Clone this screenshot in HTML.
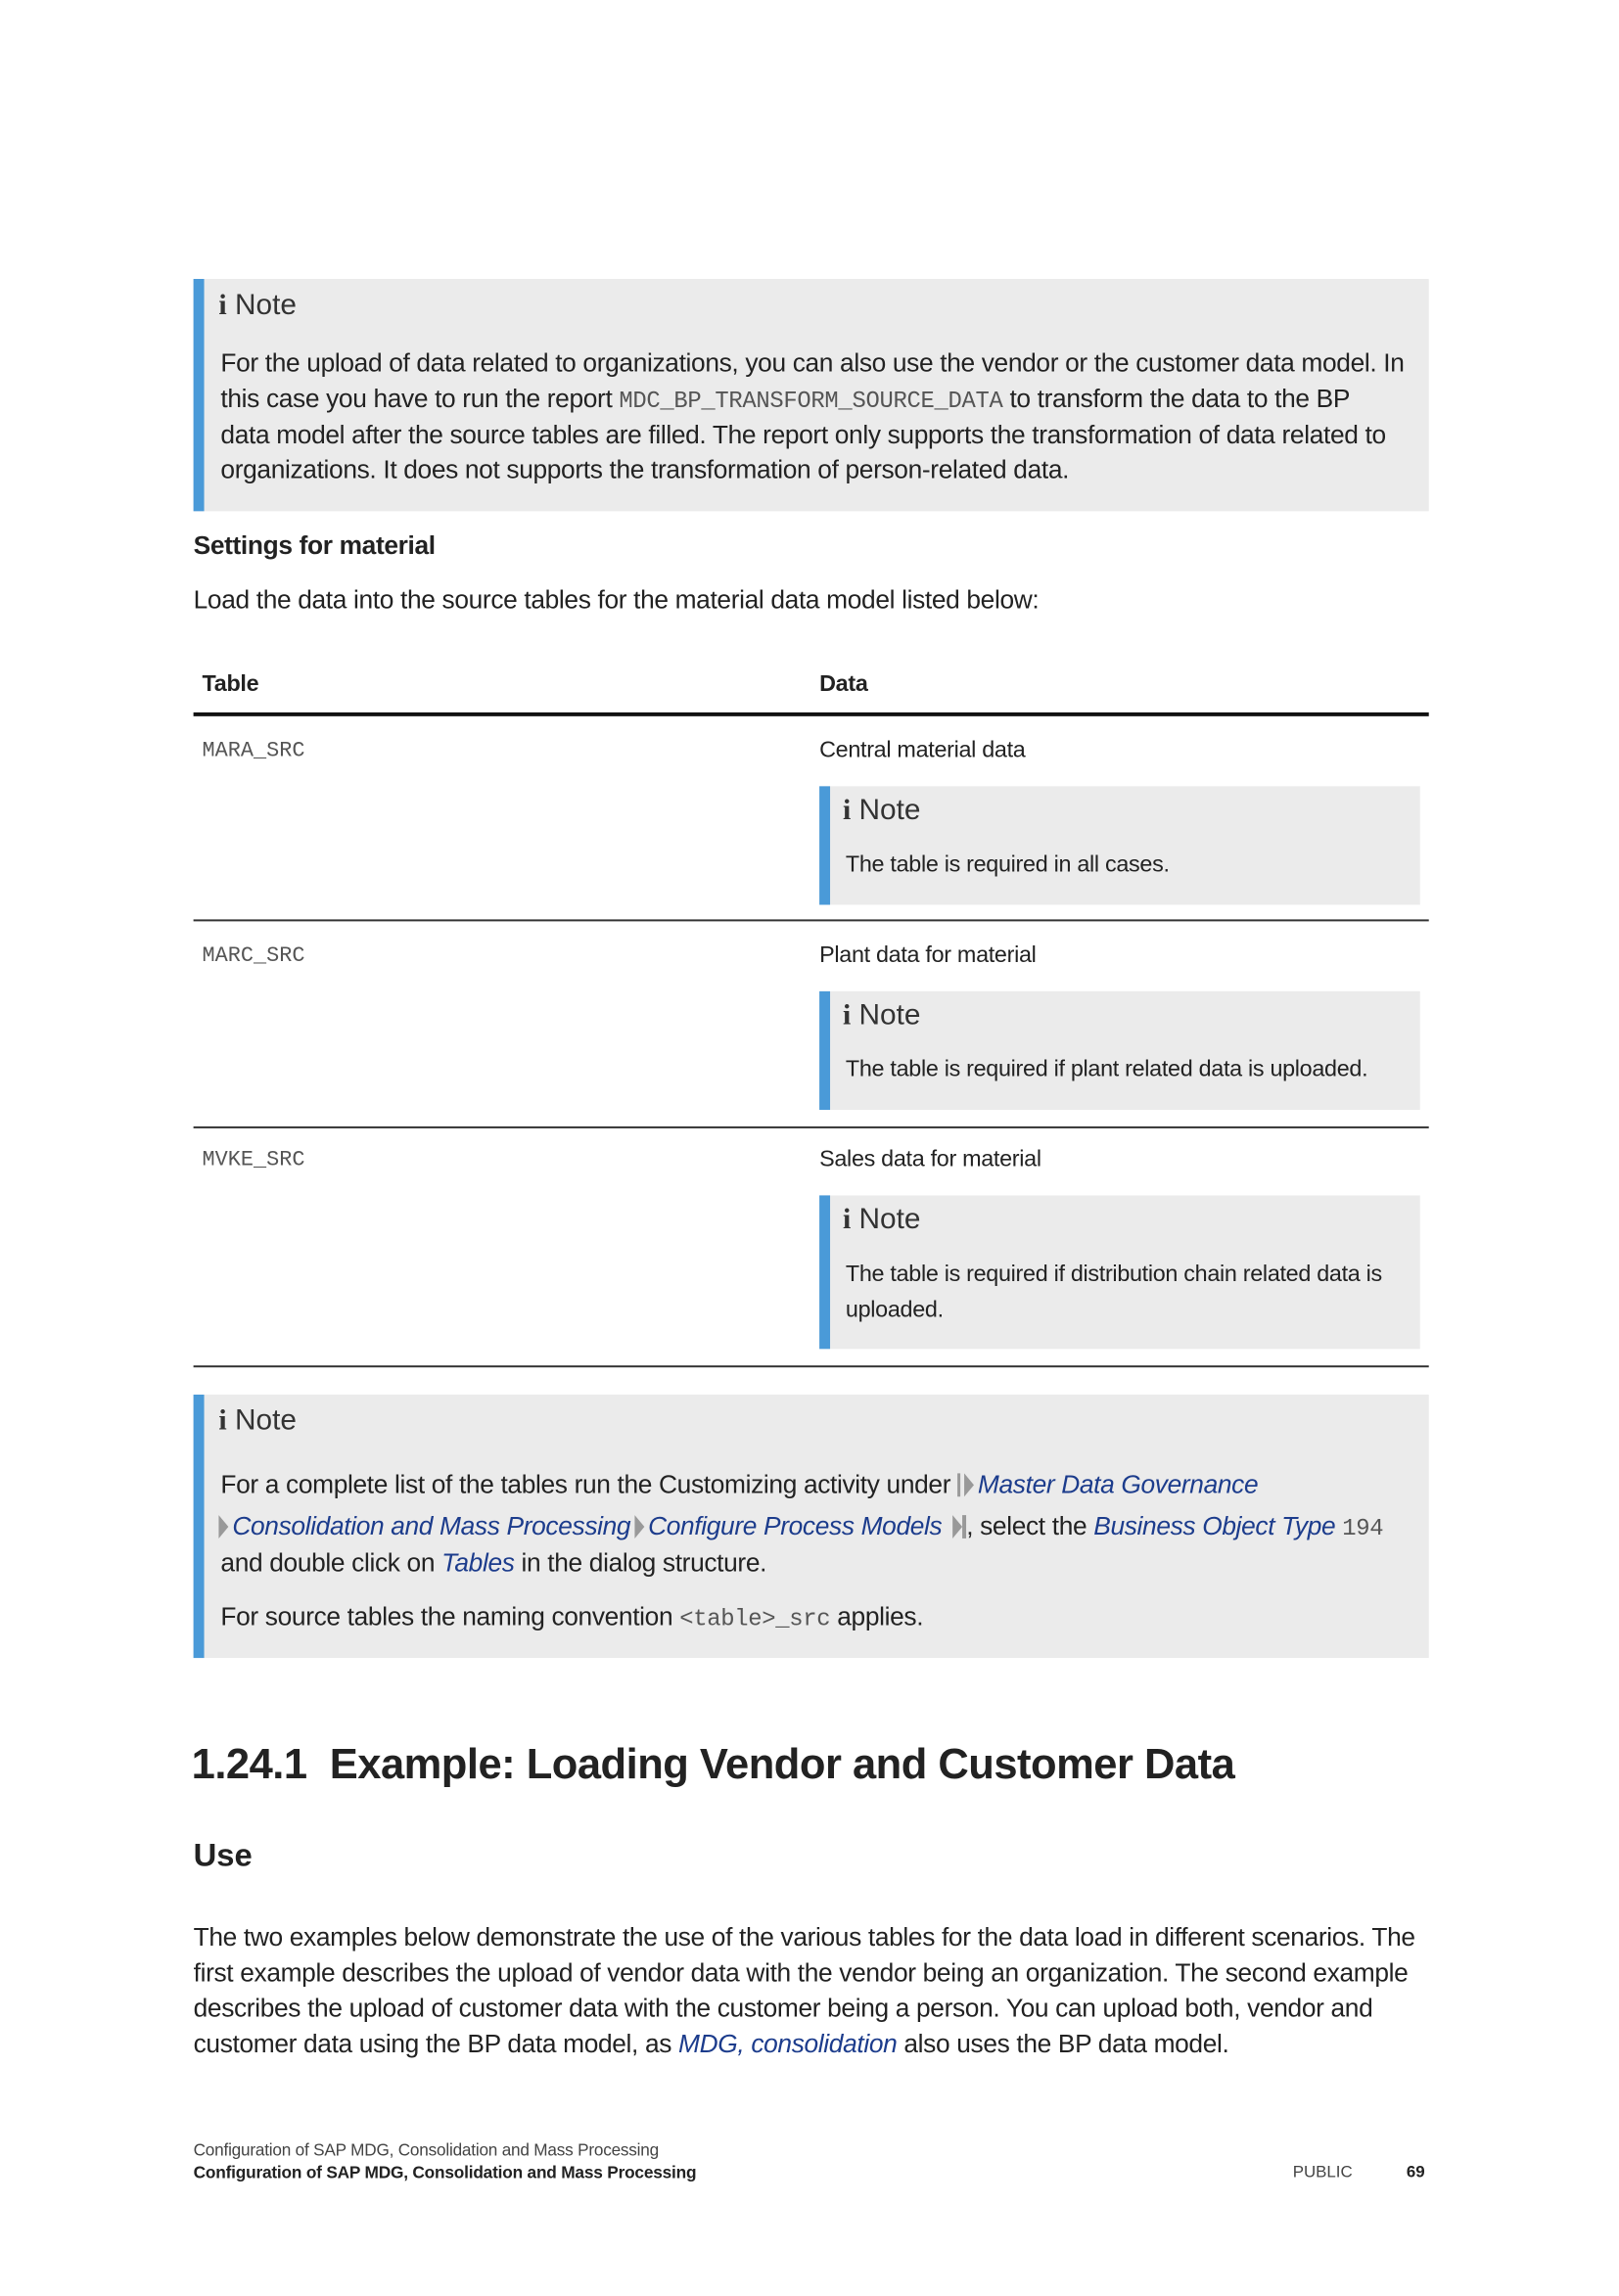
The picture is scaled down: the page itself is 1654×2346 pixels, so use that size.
<!DOCTYPE html>
<html><head><meta charset="utf-8"><style>
body{margin:0;width:1654px;height:2339px;background:#fff;overflow:hidden;font-family:"Liberation Sans",sans-serif;color:#222}
#w{position:absolute;left:1px;top:3px;width:1669px;height:2360px;transform:scale(0.993);transform-origin:0 0}
.t{position:absolute;white-space:nowrap;font-size:26.5px;line-height:26px;letter-spacing:-0.35px}
.s{font-size:23.5px;letter-spacing:-0.3px}
.box{position:absolute;background:#ebebeb;border-left:11px solid #4a9ad8;box-sizing:border-box}
.n{font-size:30px;line-height:32px;color:#333;letter-spacing:0}
.n b{font-family:"Liberation Serif",serif;font-weight:bold}
.m{font-family:"Liberation Mono",monospace;font-size:24px;color:#555;letter-spacing:-0.3px}
.mt{font-family:"Liberation Mono",monospace;font-size:22px;color:#555;letter-spacing:0}
.l{color:#1c3c8c;font-style:italic}
.hr{position:absolute;left:198px;width:1271px;height:2px;background:#333}
.arr{display:inline-block;width:0;height:0;border-top:12px solid transparent;border-bottom:12px solid transparent;border-left:10px solid #999;vertical-align:-4px;margin:0 4px}
</style></head><body><div id="w">

<div class="box" style="left:198px;top:284px;width:1271px;height:239px"></div>
<div class="t n" style="left:224px;top:295px"><b>i</b> Note</div>
<div class="t" style="left:226px;top:357px">For the upload of data related to organizations, you can also use the vendor or the customer data model. In</div>
<div class="t" style="left:226px;top:394px">this case you have to run the report <span class="m">MDC_BP_TRANSFORM_SOURCE_DATA</span> to transform the data to the BP</div>
<div class="t" style="left:226px;top:431px">data model after the source tables are filled. The report only supports the transformation of data related to</div>
<div class="t" style="left:226px;top:467px">organizations. It does not supports the transformation of person-related data.</div>

<div class="t" style="left:198px;top:545px;font-weight:bold">Settings for material</div>
<div class="t" style="left:198px;top:601px">Load the data into the source tables for the material data model listed below:</div>

<div class="t s" style="left:207px;top:687px;font-weight:bold">Table</div>
<div class="t s" style="left:842px;top:687px;font-weight:bold">Data</div>
<div class="hr" style="top:730px;height:4px;background:#111"></div>

<div class="t mt" style="left:207px;top:757px">MARA_SRC</div>
<div class="t s" style="left:842px;top:755px">Central material data</div>
<div class="box" style="left:842px;top:806px;width:618px;height:122px"></div>
<div class="t n" style="left:866px;top:815px"><b>i</b> Note</div>
<div class="t s" style="left:869px;top:873px">The table is required in all cases.</div>
<div class="hr" style="top:943px"></div>

<div class="t mt" style="left:207px;top:968px">MARC_SRC</div>
<div class="t s" style="left:842px;top:966px">Plant data for material</div>
<div class="box" style="left:842px;top:1017px;width:618px;height:122px"></div>
<div class="t n" style="left:866px;top:1026px"><b>i</b> Note</div>
<div class="t s" style="left:869px;top:1083px">The table is required if plant related data is uploaded.</div>
<div class="hr" style="top:1156px"></div>

<div class="t mt" style="left:207px;top:1178px">MVKE_SRC</div>
<div class="t s" style="left:842px;top:1176px">Sales data for material</div>
<div class="box" style="left:842px;top:1227px;width:618px;height:158px"></div>
<div class="t n" style="left:866px;top:1236px"><b>i</b> Note</div>
<div class="t s" style="left:869px;top:1294px">The table is required if distribution chain related data is</div>
<div class="t s" style="left:869px;top:1331px">uploaded.</div>
<div class="hr" style="top:1402px"></div>

<div class="box" style="left:198px;top:1432px;width:1271px;height:271px"></div>
<div class="t n" style="left:224px;top:1443px"><b>i</b> Note</div>
<div class="t" style="left:226px;top:1511px">For a complete list of the tables run the Customizing activity under <span style="display:inline-block;width:3px;height:24px;background:#999;vertical-align:-4px"></span><span class="arr"></span><span class="l">Master Data Governance</span></div>
<div class="t" style="left:224px;top:1554px"><span class="arr" style="margin-left:0"></span><span class="l">Consolidation and Mass Processing</span><span class="arr"></span><span class="l">Configure Process Models</span> <span class="arr"></span><span style="display:inline-block;width:4px;height:24px;background:#999;vertical-align:-4px;margin-left:-4px"></span>, select the <span class="l">Business Object Type</span> <span class="m">194</span></div>
<div class="t" style="left:226px;top:1592px">and double click on <span class="l">Tables</span> in the dialog structure.</div>
<div class="t" style="left:226px;top:1647px">For source tables the naming convention <span class="m">&lt;table&gt;_src</span> applies.</div>

<div class="t" style="left:196px;top:1790px;font-size:43.8px;line-height:46px;font-weight:bold;letter-spacing:-0.5px">1.24.1&nbsp; Example: Loading Vendor and Customer Data</div>
<div class="t" style="left:198px;top:1888px;font-size:33px;line-height:36px;font-weight:bold;letter-spacing:0">Use</div>

<div class="t" style="left:198px;top:1977px">The two examples below demonstrate the use of the various tables for the data load in different scenarios. The</div>
<div class="t" style="left:198px;top:2014px">first example describes the upload of vendor data with the vendor being an organization. The second example</div>
<div class="t" style="left:198px;top:2050px">describes the upload of customer data with the customer being a person. You can upload both, vendor and</div>
<div class="t" style="left:198px;top:2087px">customer data using the BP data model, as <span class="l">MDG, consolidation</span> also uses the BP data model.</div>

<div class="t" style="left:198px;top:2200px;font-size:17.3px;line-height:18px;color:#444;letter-spacing:-0.2px">Configuration of SAP MDG, Consolidation and Mass Processing</div>
<div class="t" style="left:198px;top:2223px;font-size:17.4px;line-height:18px;font-weight:bold;letter-spacing:-0.2px">Configuration of SAP MDG, Consolidation and Mass Processing</div>
<div class="t" style="left:1329px;top:2223px;font-size:17px;line-height:18px;color:#444;letter-spacing:0">PUBLIC</div>
<div class="t" style="left:1446px;top:2223px;font-size:17px;line-height:18px;font-weight:bold;letter-spacing:0">69</div>
</div></body></html>
